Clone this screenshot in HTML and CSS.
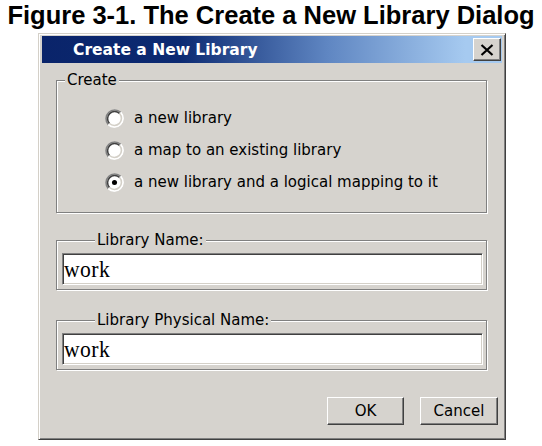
FILE: index.html
```html
<!DOCTYPE html>
<html>
<head>
<meta charset="utf-8">
<title>Create a New Library</title>
<link rel="stylesheet" href="styles.css">
</head>
<body>
<h1 class="caption">Figure 3-1. The Create a New Library Dialog</h1>
<div class="dialog">
  <div class="titlebar">
    <span class="title">Create a New Library</span>
    <button class="close" type="button" aria-label="Close">
      <svg width="14" height="12" viewBox="0 0 14 12"><path d="M1.5 1 L12.5 11 M12.5 1 L1.5 11" stroke="#000" stroke-width="2.2" fill="none"/></svg>
    </button>
  </div>
  <div class="body">
    <fieldset class="group group-create">
      <legend class="legend legend-create">Create</legend>
      <label class="radio">
        <svg class="radio-mark" width="19" height="19" viewBox="0 0 18 18"><circle cx="9" cy="9" r="8.5" fill="#fff"/><path d="M3.17 14.83 A8.25 8.25 0 0 1 14.83 3.17" stroke="#808080" stroke-width="1.5" fill="none"/><path d="M14.83 3.17 A8.25 8.25 0 0 1 3.17 14.83" stroke="#ffffff" stroke-width="1.5" fill="none"/><path d="M4.23 13.77 A6.75 6.75 0 0 1 13.77 4.23" stroke="#404040" stroke-width="1.5" fill="none"/><path d="M13.77 4.23 A6.75 6.75 0 0 1 4.23 13.77" stroke="#d4d0c8" stroke-width="1.5" fill="none"/></svg>
        <span>a new library</span>
      </label>
      <label class="radio">
        <svg class="radio-mark" width="19" height="19" viewBox="0 0 18 18"><circle cx="9" cy="9" r="8.5" fill="#fff"/><path d="M3.17 14.83 A8.25 8.25 0 0 1 14.83 3.17" stroke="#808080" stroke-width="1.5" fill="none"/><path d="M14.83 3.17 A8.25 8.25 0 0 1 3.17 14.83" stroke="#ffffff" stroke-width="1.5" fill="none"/><path d="M4.23 13.77 A6.75 6.75 0 0 1 13.77 4.23" stroke="#404040" stroke-width="1.5" fill="none"/><path d="M13.77 4.23 A6.75 6.75 0 0 1 4.23 13.77" stroke="#d4d0c8" stroke-width="1.5" fill="none"/></svg>
        <span>a map to an existing library</span>
      </label>
      <label class="radio">
        <svg class="radio-mark" width="19" height="19" viewBox="0 0 18 18"><circle cx="9" cy="9" r="8.5" fill="#fff"/><path d="M3.17 14.83 A8.25 8.25 0 0 1 14.83 3.17" stroke="#808080" stroke-width="1.5" fill="none"/><path d="M14.83 3.17 A8.25 8.25 0 0 1 3.17 14.83" stroke="#ffffff" stroke-width="1.5" fill="none"/><path d="M4.23 13.77 A6.75 6.75 0 0 1 13.77 4.23" stroke="#404040" stroke-width="1.5" fill="none"/><path d="M13.77 4.23 A6.75 6.75 0 0 1 4.23 13.77" stroke="#d4d0c8" stroke-width="1.5" fill="none"/><circle cx="9" cy="9" r="2.4" fill="#000"/></svg>
        <span>a new library and a logical mapping to it</span>
      </label>
    </fieldset>
    <fieldset class="group group-field group-name">
      <legend class="legend legend-field">Library Name:</legend>
      <div class="field" role="textbox"><span class="field-value">work</span></div>
    </fieldset>
    <fieldset class="group group-field group-physical">
      <legend class="legend legend-field">Library Physical Name:</legend>
      <div class="field" role="textbox"><span class="field-value">work</span></div>
    </fieldset>
    <div class="buttons">
      <button class="btn btn-ok" type="button">OK</button>
      <button class="btn btn-cancel" type="button">Cancel</button>
    </div>
  </div>
</div>
</body>
</html>
```
FILE: styles.css
```css
html, body {
  margin: 0;
  padding: 0;
  background: #ffffff;
}

.caption {
  margin: 0;
  font-family: "Liberation Sans", Arial, sans-serif;
  font-weight: bold;
  font-size: 25.5px;
  line-height: 30px;
  text-align: center;
  color: #000;
}

.dialog {
  box-sizing: border-box;
  width: 468px;
  margin: 3px 0 0 38px;
  border: 1px solid;
  border-color: #d4d0c8 #404040 #404040 #d4d0c8;
  box-shadow: inset 1px 1px 0 #ffffff, inset -1px -1px 0 #808080;
  padding: 2px 3px 0 3px;
  background: #d6d3ce;
  font-family: "DejaVu Sans", Verdana, sans-serif;
  font-size: 15px;
  color: #000;
}

.titlebar {
  height: 27px;
  display: flex;
  align-items: center;
  justify-content: space-between;
  padding: 0 1px 0 31px;
  background: linear-gradient(to right, #0a246a 0%, #0c2a72 30%, #5f86c2 62%, #a6caf0 92%);
}

.title {
  color: #fff;
  font-weight: bold;
  font-size: 15.5px;
}

.close {
  box-sizing: border-box;
  width: 28px;
  height: 23px;
  padding: 0;
  margin: 0;
  display: flex;
  align-items: center;
  justify-content: center;
  background: #d6d3ce;
  border: 1px solid;
  border-color: #ffffff #404040 #404040 #ffffff;
  box-shadow: inset -1px -1px 0 #808080;
}

.body {
  padding: 9px 4px 14px 14px;
}

.group {
  margin: 0 11px 0 0;
  padding: 0;
  min-width: 0;
  border: 1px solid #808080;
  box-shadow: 1px 1px 0 #ffffff, inset 1px 1px 0 #ffffff;
}

.legend {
  padding: 0 2px;
  line-height: 16px;
  background: #d6d3ce;
}

.legend-create {
  margin-left: 8px;
}

.legend-field {
  margin-left: 33px;
}

.group-create {
  padding: 14px 0 14px 0;
}

.radio {
  display: flex;
  align-items: center;
  gap: 10px;
  height: 32px;
  margin-left: 48px;
}

.radio-mark {
  display: block;
  flex: none;
}

.group-field {
  padding: 5px 3px 4px 5px;
}

.group-name {
  margin-top: 19px;
}

.group-physical {
  margin-top: 22px;
}

.field {
  box-sizing: border-box;
  height: 32px;
  display: flex;
  align-items: center;
  padding-left: 1px;
  background: #fff;
  border: 1px solid;
  border-color: #808080 #ffffff #ffffff #808080;
  box-shadow: inset 1px 1px 0 #404040, inset -1px -1px 0 #d4d0c8;
  overflow: hidden;
}

.field-value {
  display: inline-block;
  font-family: "Liberation Serif", "Times New Roman", serif;
  font-size: 24px;
  letter-spacing: 0.5px;
  transform: scaleX(0.9);
  transform-origin: left center;
}

.buttons {
  display: flex;
  justify-content: flex-end;
  gap: 16px;
  margin-top: 27px;
}

.btn {
  box-sizing: border-box;
  height: 28px;
  padding: 0;
  background: #d6d3ce;
  border: 1px solid;
  border-color: #ffffff #404040 #404040 #ffffff;
  box-shadow: inset -1px -1px 0 #808080;
  font-family: "DejaVu Sans", Verdana, sans-serif;
  font-size: 15px;
  color: #000;
}

.btn-ok {
  width: 77px;
}

.btn-cancel {
  width: 78px;
}
```
